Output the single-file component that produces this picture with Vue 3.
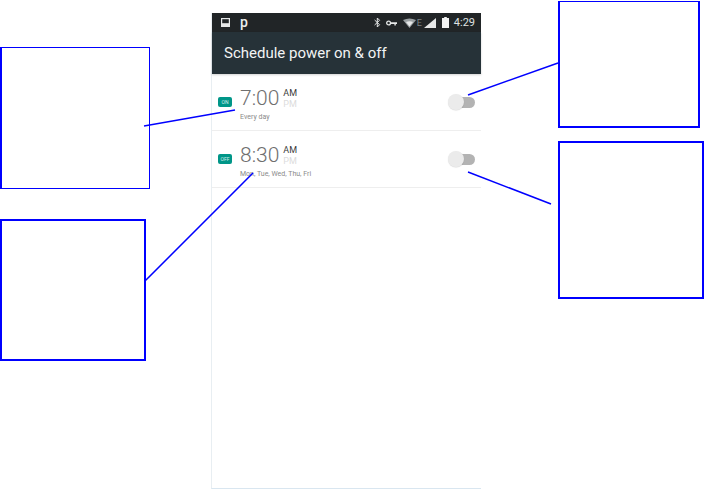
<template>
  <div class="page">
    <div class="phone">
      <div class="status-bar">
        <svg width="9" height="9" viewBox="0 0 9 9">
          <rect x="0.6" y="0.6" width="7.8" height="7.8" fill="none" stroke="#e6e8e8" stroke-width="1.2" />
          <rect x="1" y="5.2" width="7" height="3" fill="#e6e8e8" />
        </svg>
        <span class="p-mark">p</span>
        <div class="status-right">
          <svg class="bt" width="7" height="11" viewBox="0 0 7 11">
            <path d="M0.6 3l5 4.7L3.3 10V1l2.3 2.3L0.6 8" fill="none" stroke="#e6e8e8" stroke-width="1" />
          </svg>
          <svg class="key" width="11" height="6" viewBox="0 0 11 6">
            <circle cx="2.6" cy="3" r="1.9" fill="none" stroke="#e6e8e8" stroke-width="1.3" />
            <path d="M4.5 2.3H11V4H9.8v1.6H8.4V4H4.5z" fill="#e6e8e8" />
          </svg>
          <div class="net">
            <svg width="13" height="10" viewBox="0 0 13 10">
              <path d="M0 2Q6.5 -1.2 13 2L6.5 10z" fill="#9aa0a2" />
              <path d="M3 4Q6.5 2.6 10 4L6.5 8.4z" fill="#e6e8e8" />
            </svg>
            <span class="net-e">E</span>
          </div>
          <svg class="signal" width="12" height="10" viewBox="0 0 12 10">
            <path d="M12 0V10H0z" fill="#e6e8e8" />
          </svg>
          <svg class="battery" width="7" height="11" viewBox="0 0 7 11">
            <path d="M2.2 0H4.8V1H7V11H0V1H2.2z" fill="#f2f3f3" />
          </svg>
          <span class="clock">4:29</span>
        </div>
      </div>
      <div class="app-bar">Schedule power on &amp; off</div>

      <div v-for="item in schedules" :key="item.time" class="row">
        <span class="badge">{{ item.badge }}</span>
        <div class="info">
          <div class="time-line">
            <span class="time">{{ item.time }}</span>
            <div class="ampm">
              <span class="am">AM</span>
              <span class="pm">PM</span>
            </div>
          </div>
          <div class="days">{{ item.days }}</div>
        </div>
        <div class="switch">
          <span class="track"></span>
          <span class="thumb"></span>
        </div>
      </div>
    </div>

    <div
      v-for="box in boxes"
      :key="box.id"
      class="callout"
      :style="{ left: box.x + 'px', top: box.y + 'px', width: box.w + 'px', height: box.h + 'px', borderWidth: box.b }"
    ></div>

    <svg class="leaders" width="704" height="489" viewBox="0 0 704 489">
      <line x1="144" y1="126" x2="235" y2="110" />
      <line x1="145" y1="281" x2="253" y2="173" />
      <line x1="468" y1="95" x2="558" y2="63" />
      <line x1="468" y1="172" x2="551" y2="204" />
    </svg>
  </div>
</template>

<script setup>
const schedules = [
  { badge: 'ON', time: '7:00', days: 'Every day' },
  { badge: 'OFF', time: '8:30', days: 'Mon, Tue, Wed, Thu, Fri' }
];

const boxes = [
  { id: 'a', x: 0, y: 47, w: 150, h: 142, b: '1px 1px 1px 2px' },
  { id: 'b', x: 0, y: 219, w: 146, h: 142, b: '2px' },
  { id: 'c', x: 558, y: 1, w: 142, h: 127, b: '1px 2px 2px 2px' },
  { id: 'd', x: 558, y: 141, w: 146, h: 158, b: '2px' }
];
</script>

<style>
html,
body {
  margin: 0;
  background: #fff;
}
</style>

<style scoped>
.page {
  position: relative;
  width: 704px;
  height: 489px;
  overflow: hidden;
  background: #fff;
  font-family: Roboto, "Liberation Sans", sans-serif;
}

.phone {
  position: absolute;
  left: 211px;
  top: 13px;
  width: 270px;
  height: 476px;
  box-sizing: border-box;
  border-left: 1px solid #e8eef2;
  border-bottom: 1px solid #d9e6f0;
  background: #fff;
}

.status-bar {
  display: flex;
  align-items: center;
  height: 19px;
  padding: 0 6px 0 9px;
  background: #212527;
}

.p-mark {
  margin-left: 10px;
  color: #eceeee;
  font-size: 14px;
  font-weight: 500;
  line-height: 14px;
  position: relative;
  top: -1px;
}

.status-right {
  display: flex;
  align-items: center;
  margin-left: auto;
}

.key {
  margin-left: 5px;
}

.net {
  display: flex;
  align-items: center;
  gap: 1px;
  margin-left: 6px;
}

.net-e {
  color: #7d8385;
  font-size: 9px;
  line-height: 10px;
}

.signal {
  margin-left: 2px;
}

.battery {
  margin-left: 6px;
}

.clock {
  margin-left: 5px;
  color: #dfe2e2;
  font-size: 11px;
}

.app-bar {
  display: flex;
  align-items: center;
  height: 42px;
  padding-left: 12px;
  box-sizing: border-box;
  background: #263238;
  color: #f2f4f4;
  font-size: 15px;
  box-shadow: 0 1px 2px rgba(0, 0, 0, 0.18);
}

.row {
  display: flex;
  align-items: center;
  height: 57px;
  box-sizing: border-box;
  padding: 0 6px;
  border-bottom: 1px solid #eeeeee;
}

.badge {
  display: flex;
  align-items: center;
  justify-content: center;
  width: 14px;
  height: 10px;
  border-radius: 2px;
  background: #009688;
  color: #d8efec;
  font-size: 5px;
  line-height: 10px;
}

.info {
  margin-left: 8px;
  padding-top: 3px;
}

.time-line {
  display: flex;
  align-items: flex-start;
  gap: 4px;
}

.time {
  color: #6f6f6f;
  font-size: 21px;
  font-weight: 300;
  line-height: 24px;
}

.ampm {
  display: flex;
  flex-direction: column;
  font-size: 9px;
  line-height: 11px;
  padding-top: 2px;
}

.am {
  color: #3a3a3a;
}

.pm {
  color: #dcdcdc;
}

.days {
  margin-top: 3px;
  color: #8a8a8a;
  font-size: 7px;
  line-height: 8px;
}

.switch {
  position: relative;
  width: 27px;
  height: 16px;
  margin-left: auto;
}

.track {
  position: absolute;
  left: 5px;
  right: 0;
  top: 2.5px;
  height: 11px;
  border-radius: 6px;
  background: #b3b3b3;
}

.thumb {
  position: absolute;
  left: 0;
  top: 0;
  width: 16px;
  height: 16px;
  border-radius: 50%;
  background: #ebebeb;
  box-shadow: 0 0.5px 1px rgba(0, 0, 0, 0.15);
}

.callout {
  position: absolute;
  box-sizing: border-box;
  border: solid #0000ff;
  background: #fff;
}

.leaders {
  position: absolute;
  left: 0;
  top: 0;
}

.leaders line {
  stroke: #0000ff;
  stroke-width: 1.5;
}
</style>
